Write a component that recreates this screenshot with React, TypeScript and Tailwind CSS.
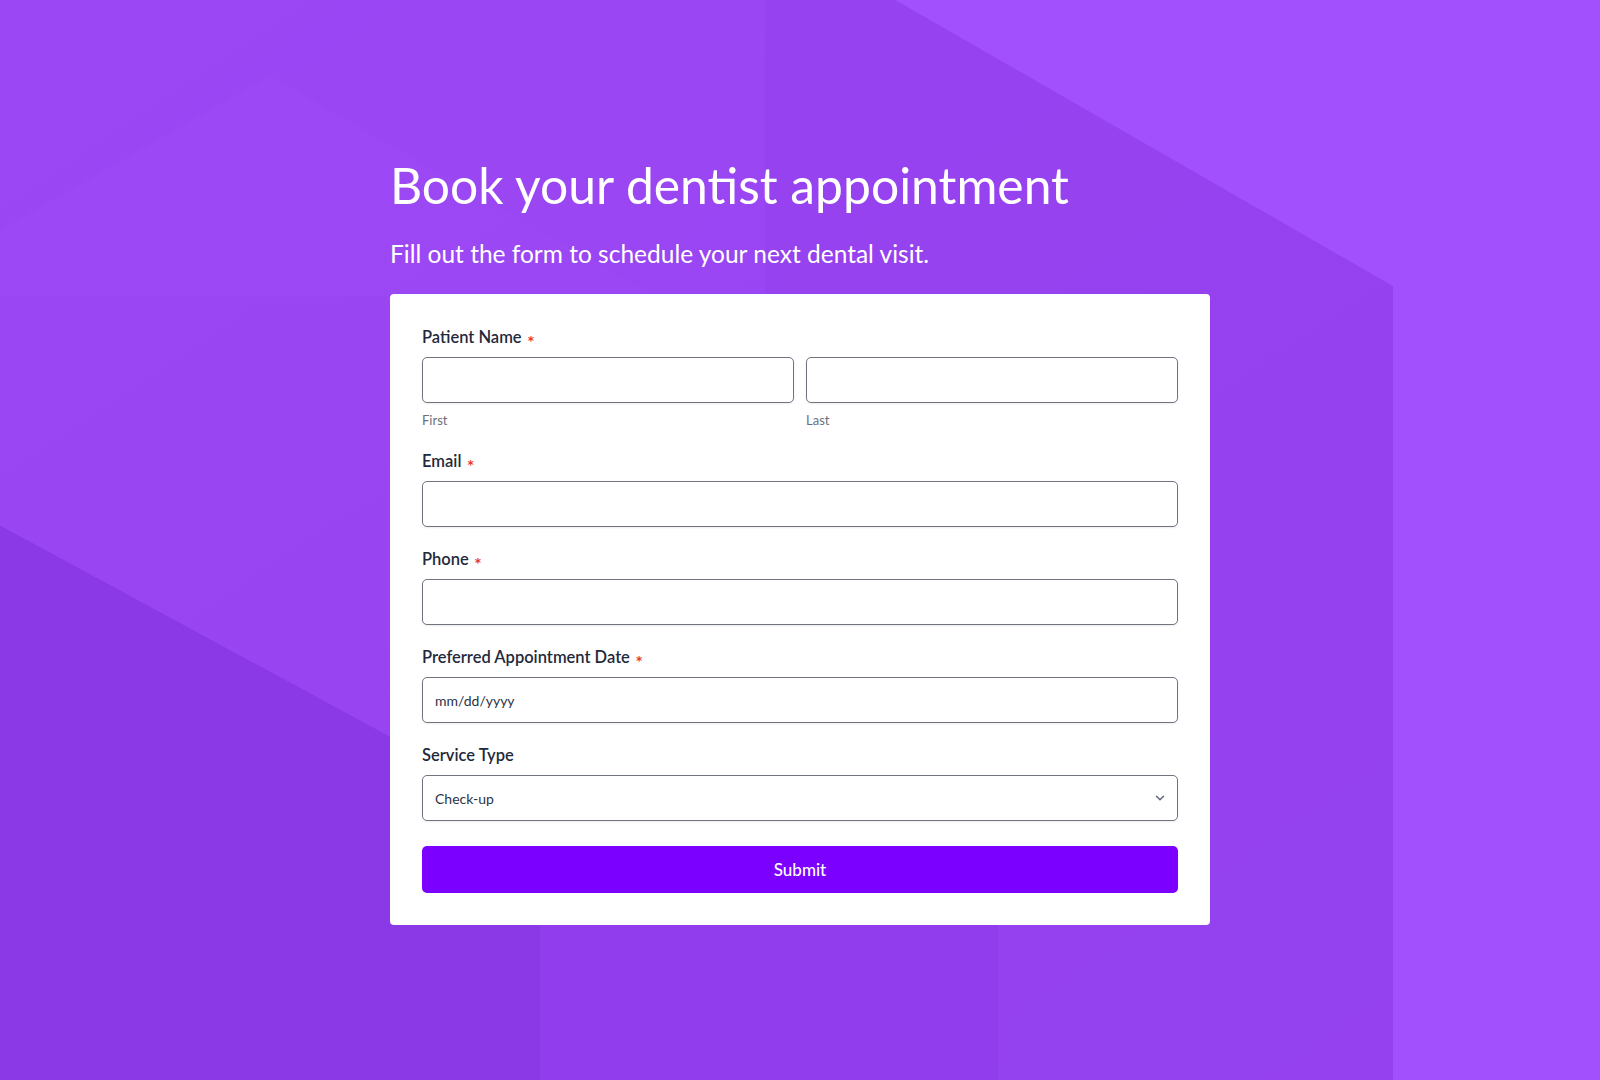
import React, { useState } from 'react';
import { ChevronDown } from 'lucide-react';

const Background: React.FC = () => (
  <svg
    className="absolute inset-0 h-full w-full"
    viewBox="0 0 1600 1080"
    preserveAspectRatio="none"
    aria-hidden="true"
  >
    <defs>
      <linearGradient id="bg" x1="0" y1="0" x2="1" y2="1">
        <stop offset="0" stopColor="#9b47f3" />
        <stop offset="1" stopColor="#9440ef" />
      </linearGradient>
    </defs>
    <rect width="1600" height="1080" fill="url(#bg)" />
    {/* left top panel */}
    <polygon points="0,0 765,0 765,300 0,300" fill="#9d49f5" opacity="0.35" />
    <polygon points="270,76 655,296 0,296 0,230" fill="#9f4cf6" opacity="0.35" />
    {/* right lighter panel */}
    <polygon points="895,0 1600,0 1600,1080 1393,1080 1393,286" fill="#a24ffd" />
    <polygon points="765,0 895,0 1393,286 1393,1080 998,1080 998,924 1210,924 1210,294 765,294" fill="#9541ee" opacity="0.6" />
    {/* bottom-left darker panel */}
    <polygon points="0,525 388,735 540,820 540,1080 0,1080" fill="#8b38e7" />
    <polygon points="540,924 998,924 998,1080 540,1080" fill="#923ded" />
  </svg>
);

const Required: React.FC = () => (
  <span className="ml-1.5 translate-y-[4px] font-['DejaVu_Sans',sans-serif] text-[12px] leading-none text-[#e5392f]">*</span>
);

const Label: React.FC<{ text: string; required?: boolean }> = ({ text, required }) => (
  <label className="flex items-center h-[22px] text-[16.5px] font-semibold text-[#1f2a3c]">
    {text}
    {required && <Required />}
  </label>
);

const fieldCls =
  'block w-full h-[46px] rounded-[5px] border border-[#6f7480] bg-white px-3 text-[14px] text-[#2c3345] shadow-[0_1px_2px_rgba(0,0,0,0.08)] outline-none placeholder:text-[#2c3345]';
const inputCls = 'mt-[9px] ' + fieldCls;

const App: React.FC = () => {
  const [service, setService] = useState('Check-up');

  return (
    <div className="relative min-h-screen w-full overflow-hidden font-['Lato','Noto_Sans',sans-serif]">
      <Background />
      <div className="relative mx-auto w-[820px] pt-[155px] pb-[156px]">
        <h1 className="text-[49.8px] leading-[60px] font-normal text-white">Book your dentist appointment</h1>
        <p className="mt-[24px] text-[24.5px] leading-[30px] font-normal text-white">
          Fill out the form to schedule your next dental visit.
        </p>

        <form
          className="mt-[25px] flex flex-col gap-[21px] rounded-[4px] bg-white p-8"
          onSubmit={(e) => e.preventDefault()}
        >
          <div>
            <Label text="Patient Name" required />
            <div className="grid grid-cols-2 gap-3">
              <div>
                <input className={inputCls} />
                <span className="mt-2 block text-[13px] leading-[18px] text-[#6b717c]">First</span>
              </div>
              <div>
                <input className={inputCls} />
                <span className="mt-2 block text-[13px] leading-[18px] text-[#6b717c]">Last</span>
              </div>
            </div>
          </div>

          <div>
            <Label text="Email" required />
            <input type="email" className={inputCls} />
          </div>

          <div>
            <Label text="Phone" required />
            <input type="tel" className={inputCls} />
          </div>

          <div>
            <Label text="Preferred Appointment Date" required />
            <input className={inputCls} placeholder="mm/dd/yyyy" />
          </div>

          <div>
            <Label text="Service Type" />
            <div className="relative mt-[9px]">
              <select
                value={service}
                onChange={(e) => setService(e.target.value)}
                className={fieldCls + ' appearance-none pr-10'}
              >
                <option>Check-up</option>
                <option>Cleaning</option>
                <option>Filling</option>
                <option>Whitening</option>
              </select>
              <ChevronDown
                className="pointer-events-none absolute right-[11px] top-1/2 h-[14px] w-[14px] -translate-y-1/2 text-[#5f6672]"
                strokeWidth={2.5}
              />
            </div>
          </div>

          <button
            type="submit"
            className="mt-1 h-[47px] w-full rounded-[5px] bg-[#7b00ff] text-[17px] font-medium text-white"
          >
            Submit
          </button>
        </form>
      </div>
    </div>
  );
};

export default App;
